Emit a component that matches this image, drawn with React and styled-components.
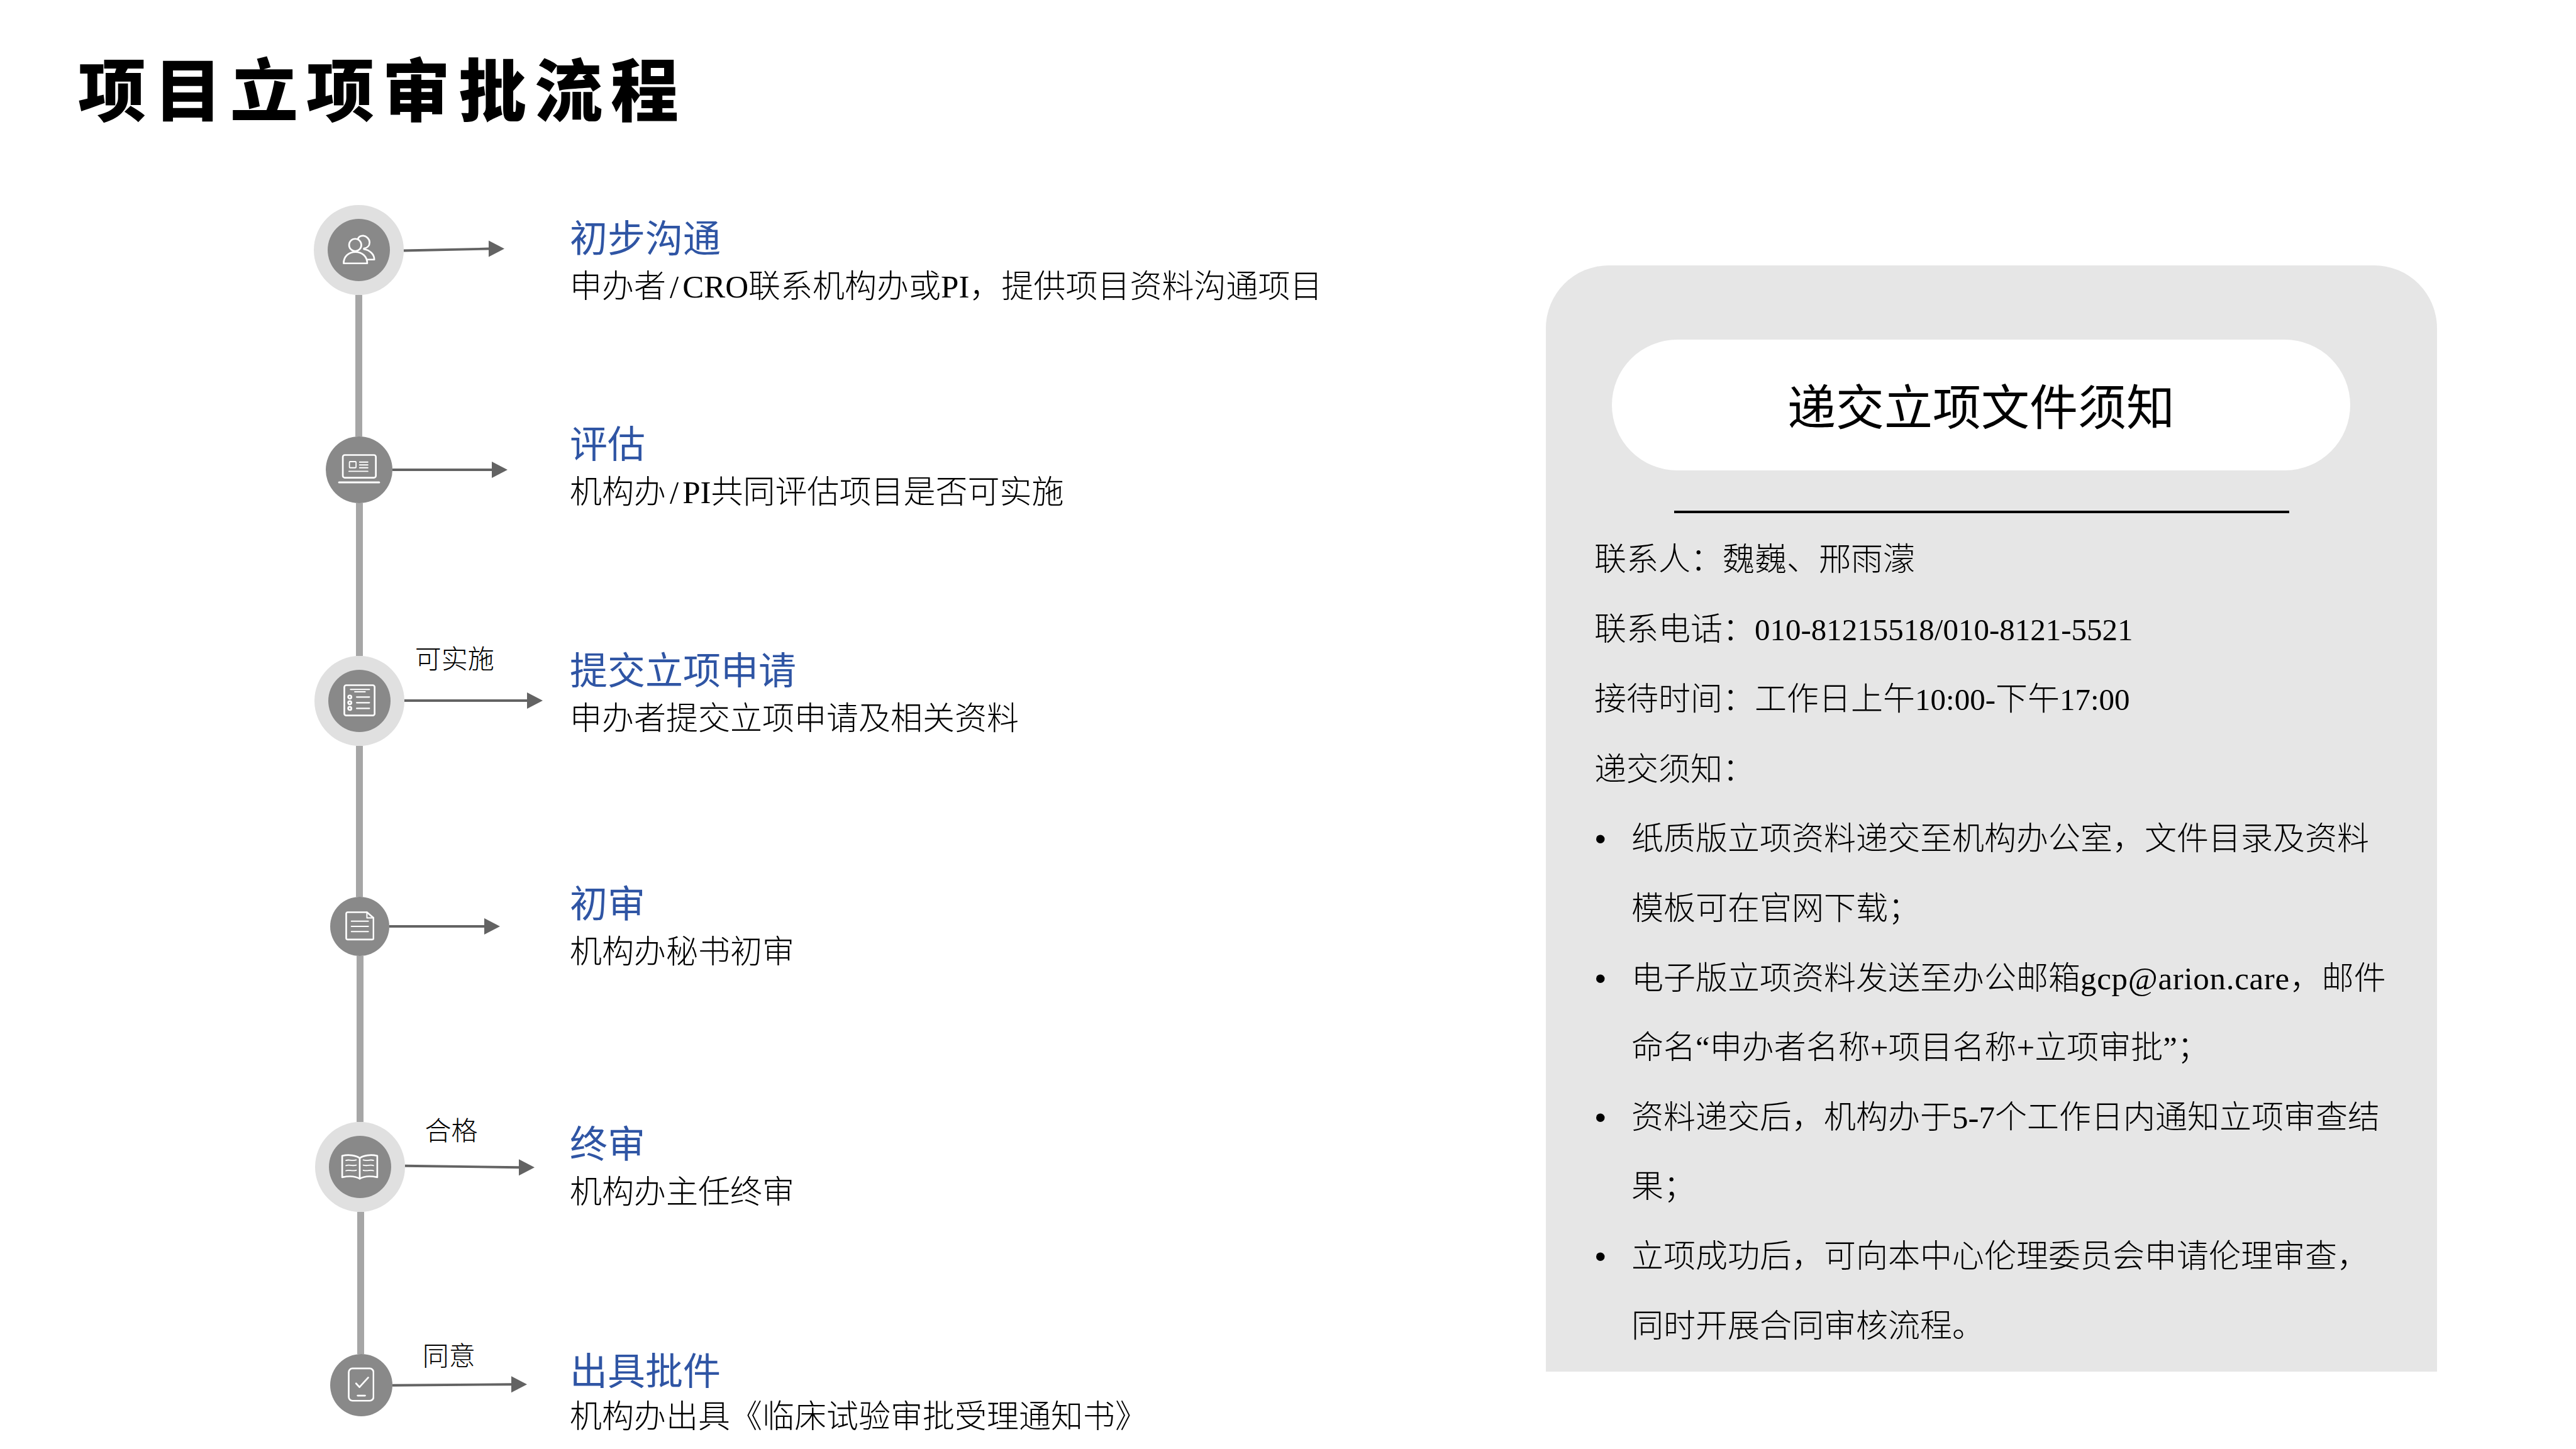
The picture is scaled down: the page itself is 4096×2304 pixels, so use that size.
import React from "react";
import styled, { createGlobalStyle } from "styled-components";

const SERIF = `"Liberation Serif", "Noto Sans CJK SC", serif`;

const Global = createGlobalStyle`
  html, body { margin: 0; padding: 0; background: #fff; }
  #root { width: 4096px; height: 2304px; }
`;

const Page = styled.div`
  width: 4096px;
  height: 2304px;
  overflow: hidden;
  background: #fff;
  font-family: ${SERIF};
  color: #000;
`;

const Header = styled.header`
  box-sizing: border-box;
  height: 325.5px;
  padding: 78px 0 0 124px;
`;

const PageTitle = styled.h1`
  margin: 0;
  font-family: "Noto Sans CJK SC", sans-serif;
  font-weight: 900;
  font-size: 108px;
  line-height: 118px;
  letter-spacing: 13px;
  color: #000;
`;

const Main = styled.main`
  display: flex;
  align-items: flex-start;
  padding-left: 499px;
`;

const Timeline = styled.section`
  width: 1959px;
  display: flex;
  flex-direction: column;
`;

const Step = styled.div`
  display: flex;
  align-items: center;
  height: ${p => p.$h}px;
`;

const Track = styled.div`
  flex: 0 0 407px;
  display: flex;
  align-items: center;
  padding-left: ${p => p.$offset}px;
  box-sizing: border-box;
`;

const Halo = styled.div`
  flex: none;
  width: 143px;
  height: 143px;
  border-radius: 50%;
  background: #e0e0e0;
  display: flex;
  align-items: center;
  justify-content: center;
`;

const Disc = styled.div`
  flex: none;
  width: ${p => p.$size}px;
  height: ${p => p.$size}px;
  border-radius: 50%;
  background: #898989;
  display: flex;
  align-items: center;
  justify-content: center;
`;

const ArrowWrap = styled.div`
  position: relative;
  flex: none;
  display: flex;
  width: ${p => p.$len}px;
  height: 40px;
`;

const ArrowLabel = styled.span`
  position: absolute;
  left: ${p => p.$left}px;
  top: ${p => p.$top}px;
  font-size: 42px;
  line-height: 42px;
  font-weight: 300;
  white-space: nowrap;
  color: #000;
`;

const StepText = styled.div`
  margin-top: ${p => p.$shift * 2}px;
  display: flex;
  flex-direction: column;
  white-space: nowrap;
`;

const StepTitle = styled.div`
  font-size: 60px;
  line-height: ${p => p.$lh}px;
  font-weight: 400;
  color: #2f55a4;
`;

const StepDesc = styled.div`
  font-size: 51px;
  line-height: ${p => p.$lh}px;
  font-weight: 300;
  color: #000;
`;

const Slash = styled.span`
  margin: 0 6px;
`;

const Connector = styled.div`
  width: 10.5px;
  height: ${p => p.$h}px;
  margin-left: ${p => p.$left}px;
  background: #a6a6a6;
`;

const Panel = styled.aside`
  box-sizing: border-box;
  width: 1417px;
  height: 1759px;
  margin-top: 96.5px;
  padding-top: 118px;
  background: #e6e6e6;
  border-radius: 100px 100px 0 0;
`;

const Pill = styled.div`
  box-sizing: border-box;
  width: 1174px;
  height: 208px;
  margin-left: 105px;
  padding-bottom: 4px;
  border-radius: 104px;
  background: #fff;
  display: flex;
  align-items: center;
  justify-content: center;
  font-size: 77px;
  font-weight: 400;
  color: #000;
`;

const Rule = styled.div`
  width: 978px;
  height: 4px;
  margin: 64px 0 19px 204px;
  background: #000;
`;

const PanelBody = styled.div`
  padding-left: 77px;
  font-size: 51px;
  line-height: 110.6px;
  font-weight: 300;
  white-space: nowrap;
  color: #000;
`;

const Line = styled.div``;

const Num = styled.span`
  font-size: 49px;
`;

const Mail = styled.span`
  letter-spacing: 0.7px;
`;

const Notes = styled.ul`
  margin: 0;
  padding: 0;
  list-style: none;
`;

const Note = styled.li`
  display: grid;
  grid-template-columns: 59px 1fr;
`;

const Dot = styled.span`
  font-family: "Liberation Sans", sans-serif;
  font-size: 50px;
  padding-left: 1px;
`;

const Ico = styled.svg`
  display: block;
  fill: none;
  stroke: #fff;
  stroke-width: 3.6;
  stroke-linecap: round;
  stroke-linejoin: round;
`;

const icon = (w, h, children) => (
  <Ico width={w * 0.8} height={h * 0.8} viewBox={`-2 -2 ${w + 4} ${h + 4}`}>{children}</Ico>
);

const UsersIcon = () => icon(67, 60, <>
  <circle cx="25.5" cy="20" r="13" />
  <path d="M1 59c0-14 10-24 25-24s25 10 25 24z" />
  <path d="M31 7.5c2-5 7-7.5 12-7s13 6 13 14c0 7-5 12-12 13" />
  <path d="M44 29c13 2 22 11 22 22H52" />
</>);

const LaptopIcon = () => icon(85, 61, <>
  <rect x="8" y="0" width="70" height="48" rx="4" />
  <rect x="22" y="14" width="14" height="13" rx="1.5" strokeWidth="2.4" />
  <path d="M43.5 15H61M43.5 21H61M43.5 27H61M21 34.5H61" strokeWidth="2.4" />
  <path d="M0 58H85" strokeWidth="4" />
</>);

const FormIcon = () => icon(64, 64, <>
  <rect x="0" y="0" width="64" height="64" rx="4" />
  <path d="M13 9H53M22 14H44" strokeWidth="2.6" />
  <circle cx="11.5" cy="25" r="3.4" />
  <circle cx="11.5" cy="37" r="3.4" />
  <circle cx="11.5" cy="49" r="3.4" />
  <path d="M26 25H53M26 37H53M26 49H53" strokeWidth="2.8" />
</>);

const DocIcon = () => icon(58, 58, <>
  <path d="M3 0H44L58 12V55a3 3 0 0 1-3 3H3a3 3 0 0 1-3-3V3a3 3 0 0 1 3-3z" />
  <path d="M44 0V12H58" strokeWidth="2.6" />
  <path d="M11 19H47M11 30H47M11 41H47" strokeWidth="2.6" />
</>);

const BookIcon = () => icon(75, 53, <>
  <path d="M37.5 8C30 2 14 0 0 3V49C14 46 29 47 37.5 52C46 47 61 46 75 49V3C61 0 45 2 37.5 8Z" />
  <path d="M37.5 8V52" />
  <g strokeWidth="2.4">
    <path d="M8 13c8-3 12 2 22-1M8 24c8-3 12 2 22-1M8 35c8-3 12 2 22-1" />
    <path d="M45 12c10 3 14-2 22 1M45 23c10 3 14-2 22 1M45 34c10 3 14-2 22 1" />
  </g>
</>);

const TabletIcon = () => icon(53, 69, <>
  <rect x="0" y="0" width="53" height="69" rx="8" />
  <path d="M15.7 32L23 40L41.7 19.5" />
  <path d="M19 58H35" />
</>);

const Arrow = ({ len, rise = 0, label, labelLeft, labelTop }) => {
  const y2 = 20 + rise;
  const end = len - 25;
  return (
    <ArrowWrap $len={len}>
      <svg width={len} height={40} viewBox={`0 0 ${len} 40`} style={{ display: "block" }}>
        <line x1="0" y1={20 - rise / 2} x2={end} y2={y2 - rise / 2} stroke="#636363" strokeWidth="3.8" />
        <polygon points={`${end},${y2 - rise / 2 - 13} ${len},${y2 - rise / 2} ${end},${y2 - rise / 2 + 13}`} fill="#636363" />
      </svg>
      {label && <ArrowLabel $left={labelLeft} $top={labelTop}>{label}</ArrowLabel>}
    </ArrowWrap>
  );
};

const steps = [
  { h: 143, off: 0, halo: true, disc: 99, Icon: UsersIcon, len: 160, rise: -3, shift: 21.5, lh: 75,
    title: "初步沟通", desc: <>申办者<Slash>/</Slash>CRO联系机构办或PI，提供项目资料沟通项目</>, gap: 225, line: 66 },
  { h: 106, off: 19.4, disc: 106, Icon: LaptopIcon, len: 183, rise: 0, shift: -1, lh: 75,
    title: "评估", desc: <>机构办<Slash>/</Slash>PI共同评估项目是否可实施</>, gap: 243, line: 67 },
  { h: 143, off: 0.8, halo: true, disc: 99, Icon: FormIcon, len: 220, rise: 0, shift: -8.5, lh: 75,
    label: "可实施", labelLeft: 17, labelTop: -66,
    title: "提交立项申请", desc: "申办者提交立项申请及相关资料", gap: 240, line: 67 },
  { h: 94, off: 26, disc: 94, Icon: DocIcon, len: 176, rise: 0, shift: 4, lh: 75,
    title: "初审", desc: "机构办秘书初审", gap: 264, line: 68 },
  { h: 143, off: 1.6, halo: true, disc: 99, Icon: BookIcon, len: 206, rise: 2.5, shift: 4, lh: 75,
    label: "合格", labelLeft: 32, labelTop: -57,
    title: "终审", desc: "机构办主任终审", gap: 226, line: 69 },
  { h: 99, off: 25.8, disc: 99, Icon: TabletIcon, len: 214, rise: -1.5, shift: 16, lh: 71,
    label: "同意", labelLeft: 48, labelTop: -46,
    title: "出具批件", desc: "机构办出具《临床试验审批受理通知书》" },
];

const notes = [
  [<>纸质版立项资料递交至机构办公室，文件目录及资料</>, "模板可在官网下载；"],
  [<>电子版立项资料发送至办公邮箱<Mail>gcp@arion.care</Mail>，邮件</>, "命名“申办者名称+项目名称+立项审批”；"],
  [<>资料递交后，机构办于5-7个工作日内通知立项审查结</>, "果；"],
  [<>立项成功后，可向本中心伦理委员会申请伦理审查，</>, "同时开展合同审核流程。"],
];

export default function App() {
  return (
    <Page>
      <Global />
      <Header>
        <PageTitle>项目立项审批流程</PageTitle>
      </Header>
      <Main>
        <Timeline>
          {steps.map(s => {
            const disc = <Disc $size={s.disc}><s.Icon /></Disc>;
            return (
              <React.Fragment key={s.title}>
                <Step $h={s.h}>
                  <Track $offset={s.off}>
                    {s.halo ? <Halo>{disc}</Halo> : disc}
                    <Arrow len={s.len} rise={s.rise} label={s.label} labelLeft={s.labelLeft} labelTop={s.labelTop} />
                  </Track>
                  <StepText $shift={s.shift}>
                    <StepTitle $lh={s.lh}>{s.title}</StepTitle>
                    <StepDesc $lh={s.lh}>{s.desc}</StepDesc>
                  </StepText>
                </Step>
                {s.gap && <Connector $h={s.gap} $left={s.line} />}
              </React.Fragment>
            );
          })}
        </Timeline>
        <Panel>
          <Pill>递交立项文件须知</Pill>
          <Rule />
          <PanelBody>
            <Line>联系人：魏巍、邢雨濛</Line>
            <Line>联系电话：<Num>010-81215518/010-8121-5521</Num></Line>
            <Line>接待时间：工作日上午<Num>10:00-</Num>下午<Num>17:00</Num></Line>
            <Line>递交须知：</Line>
            <Notes>
              {notes.map((n, i) => (
                <Note key={i}>
                  <Dot>•</Dot>
                  <span>{n[0]}<br />{n[1]}</span>
                </Note>
              ))}
            </Notes>
          </PanelBody>
        </Panel>
      </Main>
    </Page>
  );
}
